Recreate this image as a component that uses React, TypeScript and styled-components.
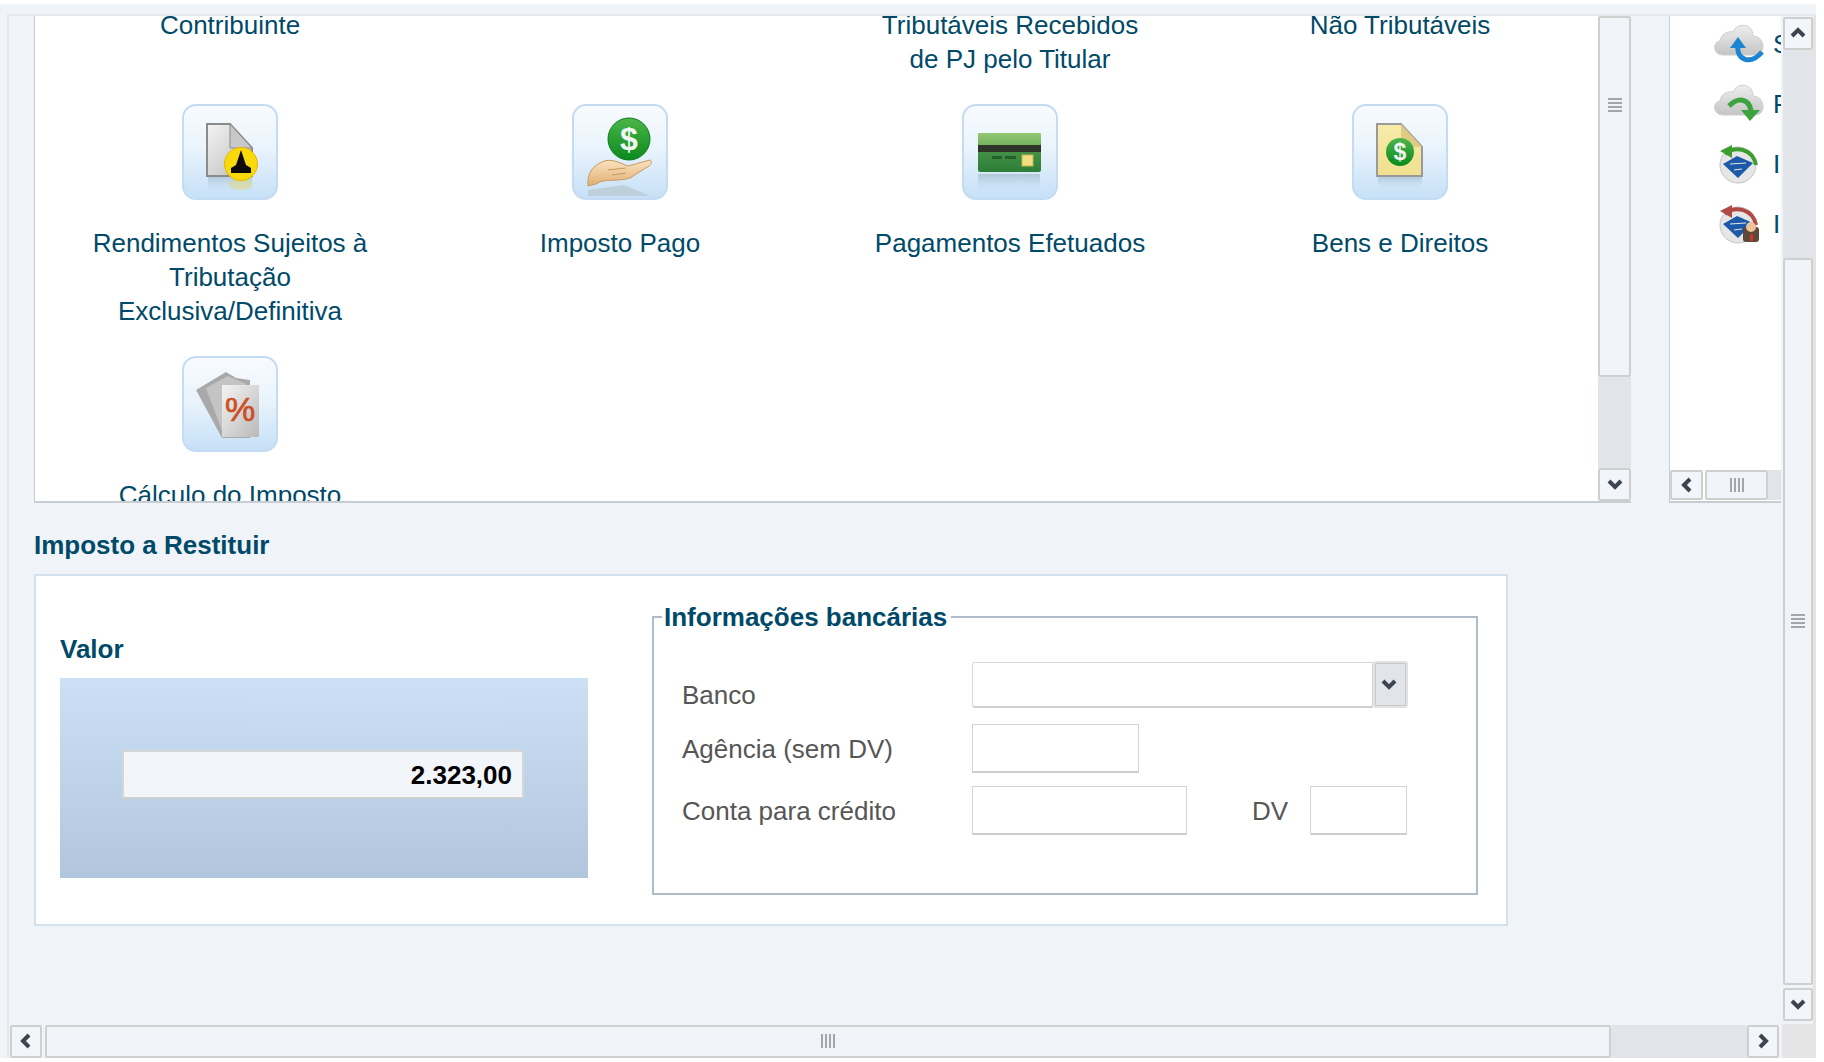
import type { ReactNode } from "react";
import styled, { createGlobalStyle } from "styled-components";

const GlobalStyle = createGlobalStyle`
    html, body {
        margin:0;
        padding:0;
        background:#ffffff;
    }
    body {
        font-family:"Liberation Sans", Arial, sans-serif;
    }
`;

const Page = styled.div`
    width:1824px;
    height:1062px;
    box-sizing:border-box;
    padding:4px 8px 4px 0;
    overflow:hidden;
`;
const Backdrop = styled.div`
    height:100%;
    padding:10px 0 0 7px;
    box-sizing:border-box;
    background:#f0f4f9;
`;
const Frame = styled.div`
    height:100%;
    box-sizing:border-box;
    border-top:2px solid #e6e8eb;
    border-left:2px solid #e6e8eb;
    display:grid;
    grid-template-columns:1773px 34px;
    grid-template-rows:1008px 34px;
`;
const Content = styled.div`
    padding-left:25px;
    overflow:hidden;
`;
const TopRow = styled.div`
    display:flex;
    height:487px;
`;
const ListPanel = styled.div`
    width:1597px;
    height:100%;
    box-sizing:border-box;
    background:#ffffff;
    border-left:1px solid #c8cfd6;
    border-bottom:2px solid #c8cdd3;
    display:flex;
`;
const ListView = styled.div`
    width:1563px;
    overflow:hidden;
    flex:none;
`;
const Grid = styled.div`
    display:grid;
    grid-template-columns:repeat(4, 390px);
    margin-top:-8px;
`;
const Item = styled.div`
    display:flex;
    flex-direction:column;
    align-items:center;
    padding-bottom:28px;
`;
const Tile = styled.div`
    width:96px;
    height:96px;
    box-sizing:border-box;
    margin-bottom:26px;
    border:2px solid #c3dcf3;
    border-radius:14px;
    background:linear-gradient(#f8fbfe, #eaf4fc 45%, #c6e0f7);
    overflow:hidden;
`;
const TileIcon = styled.svg`
    display:block;
    width:92px;
    height:92px;
`;
const ItemLabel = styled.div`
    width:320px;
    font-size:26px;
    line-height:34px;
    color:#004a69;
    text-align:center;
`;

const MainScroll = styled.div`
    display:flex;
    flex-direction:column;
    box-sizing:border-box;
    width:33px;
    height:100%;
    flex:none;
`;
const PageScroll = styled(MainScroll)`
    width:34px;
    padding:1px 0 3px 1px;
    border-right:3px solid #e4e4e4;
`;
const ScrollButton = styled.div`
    flex:none;
    box-sizing:border-box;
    width:100%;
    height:33px;
    background:#f2f5f9;
    border:2px solid #cfcfcf;
    border-radius:2px;
    display:flex;
    align-items:center;
    justify-content:center;
`;
const Thumb = styled.div<{ $size: number; $after?: number }>`
    flex:none;
    box-sizing:border-box;
    width:100%;
    height:${(props)=>props.$size}px;
    margin-bottom:${(props)=>props.$after ?? 0}px;
    background:#f0f4f9;
    border:2px solid #cfcfcf;
    border-radius:2px;
    display:flex;
    justify-content:center;
`;
const Track = styled.div`
    flex:1;
    background:#e1e5ea;
`;
const VGrip = styled.div<{ $top: number }>`
    width:14px;
    height:14px;
    margin-top:${(props)=>props.$top}px;
    background:repeating-linear-gradient(to bottom, #a2a6aa 0 2px, transparent 2px 4px);
`;
const HGrip = styled.div`
    width:14px;
    height:14px;
    background:repeating-linear-gradient(to right, #a2a6aa 0 2px, transparent 2px 4px);
`;
const HScroll = styled.div`
    display:flex;
    align-items:center;
    padding:0 3px 0 1px;
`;
const HButton = styled(ScrollButton)`
    width:32px;
`;
const HThumb = styled.div<{ $size: number }>`
    flex:none;
    box-sizing:border-box;
    width:${(props)=>props.$size}px;
    height:33px;
    margin-left:3px;
    background:#f0f4f9;
    border:2px solid #cfcfcf;
    border-radius:2px;
    display:flex;
    align-items:center;
    justify-content:center;
`;
const HTrack = styled.div`
    flex:1;
    height:33px;
    background:#e1e5ea;
`;
const Corner = styled.div`
    background:#e5e5e5;
`;

const SidePanel = styled.div`
    width:112px;
    height:100%;
    box-sizing:border-box;
    margin-left:38px;
    background:#ffffff;
    border-left:1px solid #c8cfd6;
    border-bottom:2px solid #c8cdd3;
    display:flex;
    flex-direction:column;
`;
const SideList = styled.div`
    flex:1;
    overflow:hidden;
`;
const SideColumn = styled.div`
    margin-top:-2px;
`;
const SideRow = styled.div`
    display:flex;
    align-items:center;
    height:60px;
    padding-left:43px;
    gap:8px;
`;
const SideIcon = styled.svg`
    flex:none;
    width:52px;
    height:42px;
    overflow:visible;
`;
const SideText = styled.span`
    font-size:26px;
    color:#004a69;
    white-space:nowrap;
`;
const SideScroll = styled.div`
    flex:none;
    display:flex;
    align-items:center;
    height:30px;
    margin-bottom:1px;
`;
const SideButton = styled(ScrollButton)`
    width:33px;
    height:30px;
`;
const SideThumb = styled(HThumb)`
    height:30px;
    margin-left:2px;
`;
const SideTrack = styled(HTrack)`
    height:30px;
`;

const SectionTitle = styled.h2`
    margin:25px 0 12px;
    font-size:26px;
    line-height:34px;
    font-weight:bold;
    color:#004a69;
`;
const Card = styled.div`
    width:1474px;
    height:352px;
    box-sizing:border-box;
    background:#ffffff;
    border:2px solid #d5e1ec;
    padding:24px 0 0 24px;
    display:flex;
    align-items:flex-start;
`;
const ValueColumn = styled.div`
    width:528px;
    padding-top:32px;
    flex:none;
`;
const ValueTitle = styled.div`
    margin-bottom:12px;
    font-size:26px;
    line-height:34px;
    font-weight:bold;
    color:#004a69;
`;
const ValueBand = styled.div`
    height:200px;
    box-sizing:border-box;
    padding:72px 0 0 62px;
    background:linear-gradient(#cce0f5, #b1c6dc);
`;
const ValueBox = styled.div`
    width:402px;
    height:49px;
    box-sizing:border-box;
    padding-right:10px;
    background:#f2f5fa;
    border:2px solid #d6d6d6;
    border-bottom-color:#cfcfcf;
    font-size:26px;
    font-weight:bold;
    line-height:46px;
    color:#000000;
    text-align:right;
`;
const Fieldset = styled.fieldset`
    width:826px;
    height:295px;
    box-sizing:border-box;
    margin:0 0 0 64px;
    padding:27px 0 0 28px;
    border:2px solid #b0bcc8;
    min-width:0;
`;
const Legend = styled.legend`
    margin-left:-20px;
    padding:0 4px 0 2px;
    font-size:26px;
    line-height:34px;
    font-weight:bold;
    color:#004a69;
`;
const FormRow = styled.div<{ $height: number; $after: number }>`
    display:flex;
    align-items:center;
    height:${(props)=>props.$height}px;
    margin-bottom:${(props)=>props.$after}px;
`;
const FieldLabel = styled.label<{ $drop?: number }>`
    width:290px;
    flex:none;
    padding-top:${(props)=>props.$drop ?? 2}px;
    font-size:26px;
    color:#565656;
`;
const SideLabel = styled.label`
    width:58px;
    margin-left:65px;
    padding-top:2px;
    flex:none;
    font-size:26px;
    color:#565656;
`;
const SelectBox = styled.div`
    width:401px;
    height:46px;
    box-sizing:border-box;
    border:1px solid #d8d8d8;
    border-bottom:2px solid #cfcfcf;
    border-radius:3px 0 0 3px;
    background:#ffffff;
`;
const SelectButton = styled.div`
    width:35px;
    height:47px;
    box-sizing:border-box;
    padding-right:3px;
    border:2px solid #e2e2e2;
    border-radius:3px;
    background:#e1e5ea;
    outline:1px solid #c9c9c9;
    outline-offset:-3px;
    display:flex;
    align-items:center;
    justify-content:center;
`;
const TextInput = styled.input<{ $width: number }>`
    width:${(props)=>props.$width}px;
    height:49px;
    box-sizing:border-box;
    margin:0;
    padding:0;
    border:1px solid #d3d3d3;
    border-bottom:2px solid #cdcdcd;
    background:#ffffff;
    flex:none;
`;

type Direction = "up" | "down" | "left" | "right";
const chevrons: Record<Direction, string> = {
    up: "M3 11 L9 5 L15 11",
    down: "M3 5 L9 11 L15 5",
    left: "M12 3 L6 9 L12 15",
    right: "M6 3 L12 9 L6 15",
};
const Chevron = ({ dir }: { dir: Direction }) => (
    <svg width={18} height={18} viewBox="0 0 18 18">
        <path d={chevrons[dir]} fill="none" stroke="#3c4450" strokeWidth="4" />
    </svg>
);

const Defs = () => (
    <svg width="0" height="0" style={{ position: "absolute" }}>
        <defs>
            <linearGradient id="paper" x1="0" y1="0" x2="1" y2="1">
                <stop offset="0" stopColor="#f4f4f4" />
                <stop offset="1" stopColor="#b9b9b9" />
            </linearGradient>
            <linearGradient id="note" x1="0" y1="0" x2="0" y2="1">
                <stop offset="0" stopColor="#f8ecab" />
                <stop offset="1" stopColor="#f0df8e" />
            </linearGradient>
            <linearGradient id="coin" x1="0" y1="0" x2="0" y2="1">
                <stop offset="0" stopColor="#4cb548" />
                <stop offset="1" stopColor="#0a8a1e" />
            </linearGradient>
            <linearGradient id="cardBody" x1="0" y1="0" x2="0" y2="1">
                <stop offset="0" stopColor="#5aa352" />
                <stop offset="1" stopColor="#2c7d38" />
            </linearGradient>
            <linearGradient id="cardTop" x1="0" y1="0" x2="0" y2="1">
                <stop offset="0" stopColor="#93c873" />
                <stop offset="1" stopColor="#74b35f" />
            </linearGradient>
            <linearGradient id="skin" x1="0" y1="0" x2="0" y2="1">
                <stop offset="0" stopColor="#fbe3c1" />
                <stop offset="1" stopColor="#e0ae72" />
            </linearGradient>
            <linearGradient id="cloud" x1="0" y1="0" x2="0" y2="1">
                <stop offset="0" stopColor="#eeeeee" />
                <stop offset="1" stopColor="#c4c4c4" />
            </linearGradient>
            <linearGradient id="shine" x1="0" y1="0" x2="0" y2="1">
                <stop offset="0" stopColor="#9db8c8" stopOpacity="0.7" />
                <stop offset="1" stopColor="#c6e0f7" stopOpacity="0" />
            </linearGradient>
        </defs>
    </svg>
);

const DocAlertIcon = () => (
    <TileIcon viewBox="0 0 92 92">
        <rect x="24" y="70" width="44" height="16" fill="url(#shine)" />
        <ellipse cx="57" cy="78" rx="12" ry="6" fill="#e7d66a" opacity="0.45" />
        <path d="M23 18 H46 L68 42 V70 H23 Z" fill="url(#paper)" stroke="#8b8b8b" strokeWidth="2" />
        <path d="M46 18 V42 H68 Z" fill="#c8c8c8" stroke="#8b8b8b" strokeWidth="1" />
        <circle cx="57" cy="58" r="16.5" fill="#f9d90b" stroke="#e6b800" strokeWidth="1" />
        <path d="M57 44 L62 59 L67 62 V67 H47 V62 L52 59 Z" fill="#0c0c0c" />
    </TileIcon>
);
const HandCoinIcon = () => (
    <TileIcon viewBox="0 0 92 92">
        <path d="M14 84 L50 79 L76 90 H14 Z" fill="#aeb8b8" opacity="0.45" />
        <circle cx="55" cy="33" r="21" fill="url(#coin)" stroke="#0d7a1b" strokeWidth="1" />
        <text x="55" y="44" fontFamily="Liberation Sans" fontSize="32" fontWeight="bold" fill="#f2f6f2" textAnchor="middle">$</text>
        <path d="M14 80 C13 68 18 60 28 56 C36 52 44 56 54 60 L76 54 C78 55 78 58 75 60 L56 72 C44 76 30 72 22 78 Z" fill="url(#skin)" stroke="#c89a5e" strokeWidth="1" />
        <path d="M34 64 L52 62 M38 69 L52 67" stroke="#c89a5e" strokeWidth="1" fill="none" />
    </TileIcon>
);
const CreditCardIcon = () => (
    <TileIcon viewBox="0 0 92 92">
        <rect x="14" y="68" width="62" height="18" fill="url(#shine)" />
        <rect x="14" y="27" width="63" height="39" rx="2" fill="url(#cardBody)" />
        <rect x="14" y="27" width="63" height="12" rx="2" fill="url(#cardTop)" />
        <rect x="14" y="39" width="63" height="7" fill="#2d352a" />
        <rect x="28" y="50" width="10" height="3" fill="#245f2c" />
        <rect x="41" y="50" width="11" height="3" fill="#245f2c" />
        <rect x="58" y="49" width="11" height="11" fill="#f0df82" stroke="#c9b455" strokeWidth="1" />
    </TileIcon>
);
const BensIcon = () => (
    <TileIcon viewBox="0 0 92 92">
        <rect x="24" y="70" width="44" height="14" fill="url(#shine)" />
        <path d="M23 18 H47 L68 41 V70 H23 Z" fill="url(#note)" stroke="#9a9a9a" strokeWidth="2" />
        <path d="M47 18 V41 H68 Z" fill="#e0cc80" />
        <circle cx="46" cy="46" r="14" fill="url(#coin)" />
        <text x="46" y="54" fontFamily="Liberation Sans" fontSize="23" fontWeight="bold" fill="#f2f6f2" textAnchor="middle">$</text>
    </TileIcon>
);
const PercentIcon = () => (
    <TileIcon viewBox="0 0 92 92">
        <path d="M12 32 L42 14 L52 20 L66 22 L66 80 L38 80 Z" fill="#a9a9a9" />
        <path d="M22 30 L44 18 L62 26 L62 78 L40 78 Z" fill="#c4c4c4" />
        <rect x="38" y="27" width="37" height="52" fill="url(#paper)" />
        <text x="56" y="63" fontFamily="Liberation Sans" fontSize="34" fill="#cb4f26" stroke="#cb4f26" strokeWidth="0.7" textAnchor="middle">%</text>
    </TileIcon>
);

const CloudShape = () => (
    <path d="M10 32 C0 32 -1 19 7 18 C8 10 16 8 20 9 C24 -1 40 0 40 13 C52 13 54 32 42 32 Z" fill="url(#cloud)" stroke="#cfcfcf" strokeWidth="1" />
);
const CloudUpIcon = () => (
    <SideIcon viewBox="0 0 52 42">
        <CloudShape />
        <path d="M49 29 C38 42 23 38 25 22" fill="none" stroke="#1c84d0" strokeWidth="5" />
        <path d="M17 25 L25 14 L33 25 Z" fill="#1c84d0" />
    </SideIcon>
);
const CloudGoIcon = () => (
    <SideIcon viewBox="0 0 52 42">
        <CloudShape />
        <path d="M16 23 C25 14 36 15 38 28" fill="none" stroke="#3ea33e" strokeWidth="5" />
        <path d="M28 27 L47 27 L37 38 Z" fill="#3ea33e" />
    </SideIcon>
);
const LogoIcon = ({ arrow, badge }: { arrow: string; badge?: boolean }) => (
    <SideIcon viewBox="0 0 52 42">
        <circle cx="25" cy="22" r="18" fill="#e6e6e6" stroke="#c4c4c4" strokeWidth="1" />
        <path d="M12 11 C22 2 40 6 43 22" fill="none" stroke={arrow} strokeWidth="4" />
        <path d="M7 8 L19 2 L19 15 Z" fill={arrow} />
        <path d="M10 21 L24 13 L40 20 L25 35 Z" fill="#1a5aa8" />
        <path d="M17 21 L33 20 M21 27 L29 26" stroke="#e6e6e6" strokeWidth="1" />
        {badge && <rect x="30" y="24" width="16" height="15" rx="3" fill="#5b4a3a" />}
        {badge && <circle cx="38" cy="24" r="5" fill="#eec39a" />}
        {badge && <rect x="37" y="31" width="3" height="7" fill="#d0342c" />}
    </SideIcon>
);

interface Entry {
    lines:string[],
    icon?:ReactNode,
}
const entries:Entry[] = [
    { lines:["Contribuinte"] },
    { lines:[] },
    { lines:["Tributáveis Recebidos", "de PJ pelo Titular"] },
    { lines:["Não Tributáveis"] },
    { lines:["Rendimentos Sujeitos à", "Tributação", "Exclusiva/Definitiva"], icon:<DocAlertIcon /> },
    { lines:["Imposto Pago"], icon:<HandCoinIcon /> },
    { lines:["Pagamentos Efetuados"], icon:<CreditCardIcon /> },
    { lines:["Bens e Direitos"], icon:<BensIcon /> },
    { lines:["Cálculo do Imposto"], icon:<PercentIcon /> },
];

const App = () => {
    return (
        <Page>
            <GlobalStyle />
            <Defs />
            <Backdrop>
                <Frame>
                    <Content>
                        <TopRow>
                            <ListPanel>
                                <ListView>
                                    <Grid>
                                        {entries.map((entry, index) => (
                                            <Item key={index}>
                                                {entry.icon && <Tile>{entry.icon}</Tile>}
                                                <ItemLabel>
                                                    {entry.lines.map((line) => <div key={line}>{line}</div>)}
                                                </ItemLabel>
                                            </Item>
                                        ))}
                                    </Grid>
                                </ListView>
                                <MainScroll>
                                    <Thumb $size={361}><VGrip $top={80} /></Thumb>
                                    <Track />
                                    <ScrollButton><Chevron dir="down" /></ScrollButton>
                                </MainScroll>
                            </ListPanel>
                            <SidePanel>
                                <SideList>
                                    <SideColumn>
                                        <SideRow><CloudUpIcon /><SideText>S</SideText></SideRow>
                                        <SideRow><CloudGoIcon /><SideText>F</SideText></SideRow>
                                        <SideRow><LogoIcon arrow="#3c9e2e" /><SideText>I</SideText></SideRow>
                                        <SideRow><LogoIcon arrow="#b04a44" badge /><SideText>I</SideText></SideRow>
                                    </SideColumn>
                                </SideList>
                                <SideScroll>
                                    <SideButton><Chevron dir="left" /></SideButton>
                                    <SideThumb $size={63}><HGrip /></SideThumb>
                                    <SideTrack />
                                </SideScroll>
                            </SidePanel>
                        </TopRow>
                        <SectionTitle>Imposto a Restituir</SectionTitle>
                        <Card>
                            <ValueColumn>
                                <ValueTitle>Valor</ValueTitle>
                                <ValueBand>
                                    <ValueBox>2.323,00</ValueBox>
                                </ValueBand>
                            </ValueColumn>
                            <Fieldset>
                                <Legend>Informações bancárias</Legend>
                                <FormRow $height={47} $after={16}>
                                    <FieldLabel $drop={22}>Banco</FieldLabel>
                                    <SelectBox />
                                    <SelectButton><Chevron dir="down" /></SelectButton>
                                </FormRow>
                                <FormRow $height={49} $after={13}>
                                    <FieldLabel>Agência (sem DV)</FieldLabel>
                                    <TextInput $width={167} />
                                </FormRow>
                                <FormRow $height={49} $after={0}>
                                    <FieldLabel>Conta para crédito</FieldLabel>
                                    <TextInput $width={215} />
                                    <SideLabel>DV</SideLabel>
                                    <TextInput $width={97} />
                                </FormRow>
                            </Fieldset>
                        </Card>
                    </Content>
                    <PageScroll>
                        <ScrollButton><Chevron dir="up" /></ScrollButton>
                        <Track />
                        <Thumb $size={727} $after={3}><VGrip $top={354} /></Thumb>
                        <ScrollButton><Chevron dir="down" /></ScrollButton>
                    </PageScroll>
                    <HScroll>
                        <HButton><Chevron dir="left" /></HButton>
                        <HThumb $size={1566}><HGrip /></HThumb>
                        <HTrack />
                        <HButton><Chevron dir="right" /></HButton>
                    </HScroll>
                    <Corner />
                </Frame>
            </Backdrop>
        </Page>
    )
};

export default App;
